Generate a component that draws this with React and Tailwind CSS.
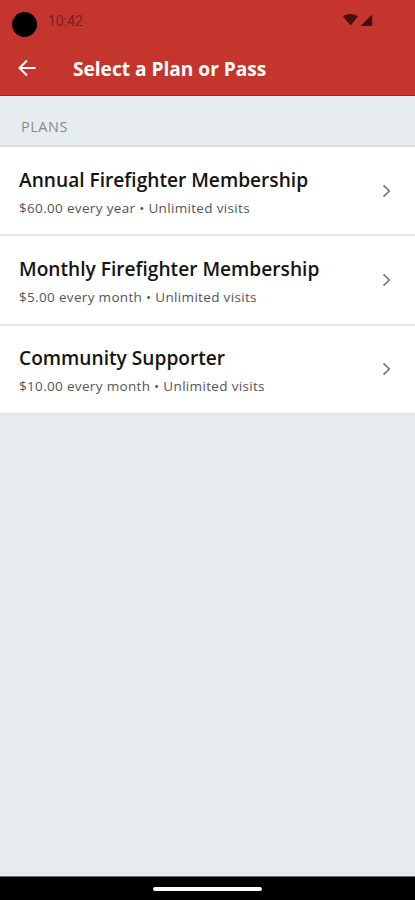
import React from 'react';

const PLANS = [
  { id: 1, name: 'Annual Firefighter Membership', details: '$60.00 every year • Unlimited visits' },
  { id: 2, name: 'Monthly Firefighter Membership', details: '$5.00 every month • Unlimited visits' },
  { id: 3, name: 'Community Supporter', details: '$10.00 every month • Unlimited visits' },
];

function StatusBar() {
  return (
    <div className="flex h-[42px] items-start">
      <div className="ml-3 mt-3 h-[25px] w-[25px] rounded-full bg-black" />
      <span className="ml-[11px] mt-[12px] font-['Roboto',sans-serif] text-[14px] leading-[18px] text-[#7b1f19]">10:42</span>
      {/* Wifi and signal */}
      <svg className="ml-auto mr-[42px] mt-[13px]" width="31" height="14" viewBox="0 0 31 14" fill="#47100d">
        <path d="M1 3.6C4.8 0.2 12.2 0.2 16 3.6L8.5 12.5Z" />
        <path d="M30.2 1.5V13H18.4Z" />
      </svg>
    </div>
  );
}

function Header() {
  return (
    <div className="h-24 border-b border-[#bd1b0d] bg-[#c4352d]">
      <StatusBar />
      <div className="flex h-[53px] items-center pl-[18px]">
        <svg width="18" height="18" viewBox="0 0 18 18" fill="none" stroke="#fff" strokeWidth="2" className="-mt-[1px]">
          <path d="M17.5 9H2M9 1.5L1.5 9L9 16.5" />
        </svg>
        <h1 className="ml-[37px] mt-[1px] whitespace-nowrap font-['Open_Sans',sans-serif] text-[19.1px] font-bold leading-6 text-white">
          Select a Plan or Pass
        </h1>
      </div>
    </div>
  );
}

function PlanRow({ plan }) {
  return (
    <button className="flex h-[89.3px] w-full items-center border-b-2 border-[#e4e5e5] bg-white pl-[19px] pr-[24px] text-left">
      <div className="flex-1 whitespace-nowrap pt-[6px]">
        <div className="text-[19.15px] font-semibold leading-7 text-[#141414]">{plan.name}</div>
        <div className="text-[13.5px] leading-7 tracking-[0.33px] text-[#555]">{plan.details}</div>
      </div>
      <svg width="9" height="14" viewBox="0 0 9 14" fill="none" stroke="#777" strokeWidth="1.7">
        <path d="M1.5 1.3L7.3 7L1.5 12.7" />
      </svg>
    </button>
  );
}

export default function App() {
  return (
    <div className="flex h-screen w-full flex-col overflow-hidden bg-[#e7edee] font-['Open_Sans',sans-serif]">
      <Header />
      <div className="flex h-[51px] shrink-0 items-center border-b-2 border-[#dedfe0] pl-[21px] pt-[12px] text-[14.5px] tracking-[0.5px] text-[#858a8b]">
        PLANS
      </div>
      {PLANS.map((plan) => (
        <PlanRow key={plan.id} plan={plan} />
      ))}
      <div className="mt-auto flex h-6 items-center justify-center border-t border-[#6c6f70] bg-black">
        <div className="h-1 w-[109px] rounded-full bg-white" />
      </div>
    </div>
  );
}
